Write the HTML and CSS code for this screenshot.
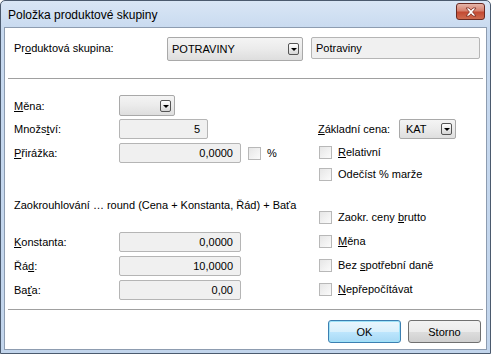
FILE: index.html
```html
<!DOCTYPE html>
<html>
	<head>
		<meta charset="UTF-8">
		<title>Položka produktové skupiny</title>
		<link rel="stylesheet" href="styles.css">
	</head>
	<body>
		<div class="window">
			<div class="titlebar">
				<span class="title">Položka produktové skupiny</span>
				<span class="close">
					<svg width="14" height="10" viewBox="0 0 14 10">
						<path d="M2 1 L5 1 L7 3.2 L9 1 L12 1 L8.6 5 L12 9 L9 9 L7 6.8 L5 9 L2 9 L5.4 5 Z" fill="#fff" stroke="#7a2a1e" stroke-width="0.8"/>
					</svg>
				</span>
			</div>
			<div class="client">
				<div class="head-row">
					<span class="lbl lbl-head">Pr<u>o</u>duktová skupina:</span>
					<div class="combo combo-group"><span class="combo-text">POTRAVINY</span><span class="drop"></span></div>
					<div class="field field-name">Potraviny</div>
				</div>
				<div class="sep"></div>
				<div class="main">
					<div class="col-left">
						<div class="row row-mena">
							<span class="lbl"><u>M</u>ěna:</span>
							<div class="combo combo-mena"><span class="combo-text"></span><span class="drop"></span></div>
						</div>
						<div class="row row-mnozstvi">
							<span class="lbl">Množs<u>t</u>ví:</span>
							<div class="field num num-short">5</div>
						</div>
						<div class="row row-prirazka">
							<span class="lbl"><u>P</u>řirážka:</span>
							<div class="field num">0,0000</div>
							<span class="check check-pct"></span>
							<span class="pct">%</span>
						</div>
						<div class="row row-round">
							<span>Zaokrouhlování … round (Cena + Konstanta, Řád) + Baťa</span>
						</div>
						<div class="row row-konst">
							<span class="lbl"><u>K</u>onstanta:</span>
							<div class="field num">0,0000</div>
						</div>
						<div class="row row-rad">
							<span class="lbl">Řá<u>d</u>:</span>
							<div class="field num">10,0000</div>
						</div>
						<div class="row row-bata">
							<span class="lbl">Ba<u>ť</u>a:</span>
							<div class="field num">0,00</div>
						</div>
					</div>
					<div class="col-right">
						<div class="row row-cena">
							<span class="lbl lbl-cena"><u>Z</u>ákladní cena:</span>
							<div class="combo combo-kat"><span class="combo-text">KAT</span><span class="drop"></span></div>
						</div>
						<div class="row row-rel"><span class="check"></span><span><u>R</u>elativní</span></div>
						<div class="row row-odecist"><span class="check"></span><span>Odečíst % marže</span></div>
						<div class="row row-brutto"><span class="check"></span><span>Zaokr. ceny <u>b</u>rutto</span></div>
						<div class="row row-cb"><span class="check"></span><span><u>M</u>ěna</span></div>
						<div class="row row-cb"><span class="check"></span><span>Bez <u>s</u>potřební daně</span></div>
						<div class="row row-cb"><span class="check"></span><span><u>N</u>epřepočítávat</span></div>
					</div>
				</div>
				<div class="sep"></div>
				<div class="buttons">
					<button class="btn btn-default" type="button">OK</button>
					<button class="btn" type="button">Storno</button>
				</div>
			</div>
		</div>
	</body>
</html>
```

FILE: styles.css
```css
body {
	margin: 0;
	font-family: "Liberation Sans", Arial, sans-serif;
	font-size: 11px;
	color: #000;
	background: #fff;
}
u {
	text-decoration: underline;
	text-underline-offset: 1px;
}
.window {
	box-sizing: border-box;
	width: 491px;
	height: 354px;
	border: 1px solid #4b5a6e;
	border-radius: 5px 5px 0 0;
	background: linear-gradient(#d9e6f5, #c7d9ef 30px, #c2d5ec);
	display: flex;
	flex-direction: column;
}
.titlebar {
	height: 26px;
	display: flex;
	align-items: center;
	padding: 0 5px 0 7px;
}
.title {
	flex: 1;
	font-size: 12px;
	color: #000;
	padding-top: 1px;
}
.close {
	box-sizing: border-box;
	width: 29px;
	height: 17px;
	margin-top: -5px;
	border: 1px solid #6a2a22;
	border-radius: 3px;
	background: linear-gradient(#e6b6aa, #d7826f 45%, #c34a33 55%, #cf6b4f);
	display: flex;
	align-items: center;
	justify-content: center;
}
.client {
	flex: 1;
	margin: 0 3px 3px 3px;
	border: 1px solid #8d9cb0;
	background: #fff;
	display: flex;
	flex-direction: column;
}
.head-row {
	display: flex;
	align-items: flex-start;
	height: 41px;
	padding: 9px 0 0 9px;
}
.lbl {
	width: 105px;
	flex: none;
}
.lbl-head {
	width: 153px;
	line-height: 23px;
}
.combo {
	box-sizing: border-box;
	display: flex;
	align-items: center;
	border: 1px solid #a9a9a9;
	border-radius: 2px;
	background: linear-gradient(#f4f4f4, #ebebeb 50%, #dedede);
	padding: 0 3px 0 4px;
}
.combo-text {
	flex: 1;
}
.drop {
	box-sizing: border-box;
	width: 11px;
	height: 12px;
	border: 1px solid #555;
	border-radius: 2px;
	background: linear-gradient(#fff, #d6d6d6);
	position: relative;
}
.drop::after {
	content: "";
	position: absolute;
	left: 2px;
	top: 4px;
	border-left: 3px solid transparent;
	border-right: 3px solid transparent;
	border-top: 3px solid #000;
}
.combo-group {
	width: 136px;
	height: 24px;
}
.field {
	box-sizing: border-box;
	background: #f0f0f0;
	border: 1px solid #b5b5b5;
	border-radius: 2px;
	height: 20px;
	line-height: 18px;
	padding: 0 7px;
}
.field-name {
	width: 169px;
	height: 22px;
	margin-left: 8px;
	padding: 0 4px;
	line-height: 21px;
}
.sep {
	height: 1px;
	margin: 0 3px;
	background: #a0a0a0;
	border-bottom: 1px solid #fff;
}
.main {
	height: 229px;
	display: flex;
}
.col-left {
	width: 304px;
	padding-left: 9px;
}
.col-right {
	flex: 1;
}
.row {
	display: flex;
	align-items: center;
	height: 20px;
	margin-top: 4px;
}
.row-mena {
	margin-top: 15px;
	height: 21px;
}
.combo-mena {
	width: 56px;
	height: 21px;
}
.row-mnozstvi {
	margin-top: 3px;
}
.num {
	width: 122px;
	text-align: right;
}
.num-short {
	width: 89px;
}
.row-round {
	margin-top: 32px;
}
.row-konst {
	margin-top: 17px;
}
.check {
	box-sizing: border-box;
	width: 13px;
	height: 13px;
	flex: none;
	border: 1px solid #b8b8b8;
	background: linear-gradient(135deg, #e6e6e6, #fbfbfb);
	margin: 0 6px 0 1px;
}
.check-pct {
	margin-left: 7px;
}
.row-cena {
	margin-top: 39px;
}
.lbl-cena {
	width: 81px;
}
.combo-kat {
	width: 57px;
	height: 20px;
	padding-left: 6px;
}
.row-rel {
	margin-top: 3px;
}
.row-odecist {
	margin-top: 2px;
}
.row-brutto {
	margin-top: 23px;
}
.buttons {
	display: flex;
	justify-content: flex-end;
	gap: 7px;
	padding: 9px 5px 0 0;
}
.btn {
	box-sizing: border-box;
	width: 73px;
	height: 23px;
	font-family: "Liberation Sans", Arial, sans-serif;
	font-size: 11px;
	color: #000;
	border: 1px solid #707070;
	border-radius: 3px;
	background: linear-gradient(#f2f2f2, #ebebeb 50%, #dddddd 51%, #cfcfcf);
	padding: 0;
}
.btn-default {
	border-color: #3c7fb1;
	background: linear-gradient(#eaf6fd, #d9f0fc 50%, #bee6fd 51%, #a7d9f5);
	box-shadow: inset 0 0 0 1px #9ee2f8;
}
```
